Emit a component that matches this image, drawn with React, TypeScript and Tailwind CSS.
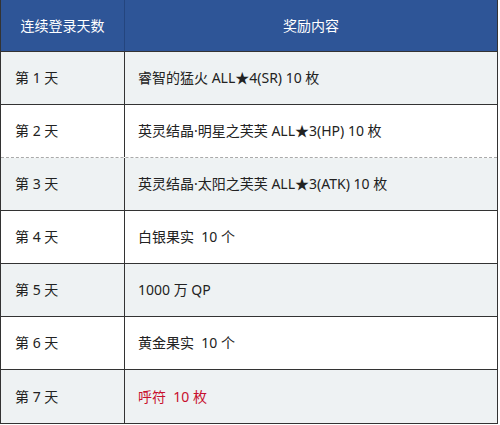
import React from "react";

const rows: { day: string; reward: string; red?: boolean }[] = [
  { day: "第 1 天", reward: "睿智的猛火 ALL★4(SR) 10 枚" },
  { day: "第 2 天", reward: "英灵结晶·明星之芙芙 ALL★3(HP) 10 枚" },
  { day: "第 3 天", reward: "英灵结晶·太阳之芙芙 ALL★3(ATK) 10 枚" },
  { day: "第 4 天", reward: "白银果实  10 个" },
  { day: "第 5 天", reward: "1000 万 QP" },
  { day: "第 6 天", reward: "黄金果实  10 个" },
  { day: "第 7 天", reward: "呼符  10 枚", red: true },
];

export default function App() {
  return (
    <div
      className="w-[500px] h-[425px] bg-white overflow-hidden"
      style={{ fontFamily: '"Noto Sans", "Noto Sans CJK SC", sans-serif' }}
    >
      <div className="w-[498px] border-l border-r border-b border-[#333] text-[14px] leading-none">
        <div className="flex h-[52px] bg-[#2e5597] text-white border-b border-[#333]">
          <div className="w-[124px] flex items-center justify-center border-r border-[#24457e]">
            连续登录天数
          </div>
          <div className="flex-1 flex items-center justify-center">奖励内容</div>
        </div>
        {rows.map((r, i) => (
          <div
            key={i}
            className={
              "flex h-[53px] text-[#222] " +
              (i % 2 === 0 ? "bg-[#eef2f3] " : "bg-white ") +
              (i === rows.length - 1
                ? ""
                : i === 1
                ? "border-b border-dashed border-[#aaa]"
                : "border-b border-[#333]")
            }
          >
            <div className="w-[124px] flex items-center pl-[14px] border-r border-[#333]">
              {r.day}
            </div>
            <div
              className={
                "flex-1 flex items-center pl-[13px] whitespace-pre " +
                (r.red ? "text-[#c8102e]" : "")
              }
            >
              {r.reward}
            </div>
          </div>
        ))}
      </div>
    </div>
  );
}
